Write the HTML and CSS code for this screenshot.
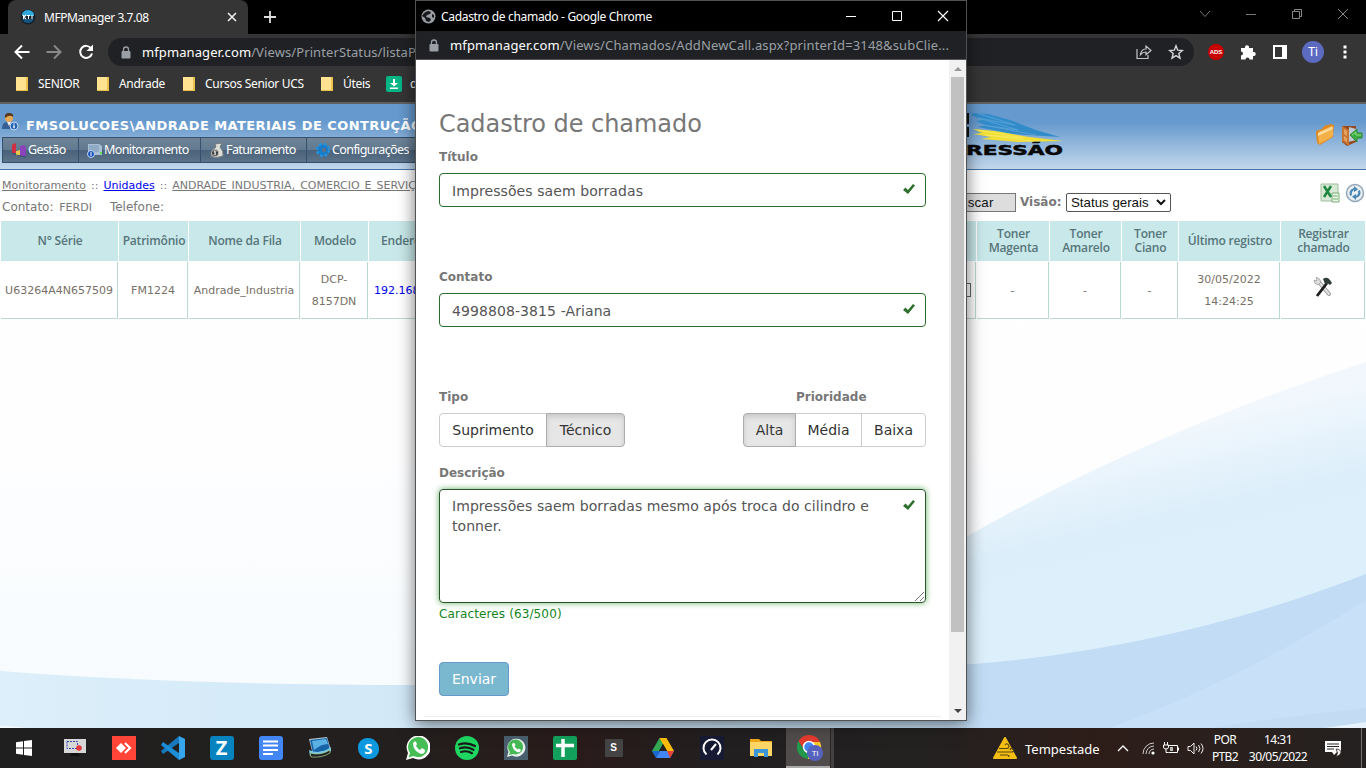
FILE: index.html
```html
<!DOCTYPE html>
<html lang="pt-BR">
<head>
<meta charset="utf-8">
<title>MFPManager 3.7.08</title>
<link rel="stylesheet" href="styles.css">
</head>
<body>
<div class="desktop">
  <div class="browser">
    <div class="tabstrip">
      <div class="tab">
        <svg class="favicon" width="16" height="16" viewBox="0 0 16 16"><circle cx="8" cy="8" r="7.500" fill="#14202b"/><path d="M2 5Q4 1 8 1t6 4v2H2z" fill="#2fa8dd"/><path d="M2 10h12Q12 14 8 14T2 10z" fill="#17557e"/><path d="M3.500 6v4M7 6.500h3M8.500 6.500V10M12 6v4M4 8l2-2M4 8l2 2" stroke="#fff" stroke-width="1.100"/></svg>
        <span class="tab-title">MFPManager 3.7.08</span>
        <svg class="tab-close" width="10" height="10" viewBox="0 0 10 10"><path d="M1 1l8 8M9 1L1 9" stroke="#eee" stroke-width="1.600"/></svg>
      </div>
      <svg class="new-tab" width="12" height="12" viewBox="0 0 12 12"><path d="M6 0v12M0 6h12" stroke="#ddd" stroke-width="1.800"/></svg>
      <div class="win-controls">
        <svg width="12" height="12" viewBox="0 0 12 12"><path d="M1 3l5 5.500L11 3" fill="none" stroke="#777"/></svg>
        <svg width="12" height="12" viewBox="0 0 12 12"><path d="M1 6.500h10" stroke="#777"/></svg>
        <svg width="12" height="12" viewBox="0 0 12 12"><path d="M1.500 3.500h7v7h-7zM3.500 3.500v-2h7v7h-2" fill="none" stroke="#888"/></svg>
        <svg width="12" height="12" viewBox="0 0 12 12"><path d="M1 1l10 10M11 1L1 11" stroke="#888"/></svg>
      </div>
    </div>
    <div class="toolbar">
      <svg width="16" height="16" viewBox="0 0 16 16"><path d="M15.500 8H2M8 1.500L1.500 8 8 14.500" fill="none" stroke="#fff" stroke-width="2"/></svg>
      <svg width="16" height="16" viewBox="0 0 16 16"><path d="M.5 8H14M8 1.500L14.500 8 8 14.500" fill="none" stroke="#898989" stroke-width="2"/></svg>
      <svg width="16" height="16" viewBox="0 0 16 16"><path d="M13.200 4.500A6 6 0 1 0 14 9.500" fill="none" stroke="#fff" stroke-width="2"/><path d="M15 .5v6.500H8.500z" fill="#fff"/></svg>
      <div class="omnibox">
        <svg width="10" height="13" viewBox="0 0 10 13"><rect x=".5" y="5" width="9" height="7.500" rx="1" fill="#9aa0a6"/><path d="M2.500 5V3.500a2.500 2.500 0 0 1 5 0V5" fill="none" stroke="#9aa0a6" stroke-width="1.300"/></svg>
        <span class="url"><b>mfpmanager.com</b>/Views/PrinterStatus/listaPr</span>
        <svg class="share" width="16" height="16" viewBox="0 0 16 16"><path d="M1 5v9.500h11V11M4.500 10.500C5 7 7 5 10 5V2l5 4.500-5 4.300V8C7.500 8 6 8.800 4.500 10.500z" fill="none" stroke="#c4c7c9" stroke-width="1.200"/></svg>
        <svg width="16" height="16" viewBox="0 0 16 16"><path d="M8 1.800l1.700 4.400 4.700.3-3.600 3 1.200 4.600L8 11.600l-4 2.500 1.200-4.600-3.600-3 4.700-.3z" fill="none" stroke="#d5d7d9" stroke-width="1.400"/></svg>
      </div>
      <div class="extensions">
        <span class="ads">ADS</span>
        <svg width="16" height="16" viewBox="0 0 16 16"><path d="M1 4h4a2.100 2.100 0 1 1 4 0h4v4a2.100 2.100 0 1 1 0 4v3.500H9.500a2 2 0 1 0-4 0H1V11.500a2 2 0 1 0 0-4z" fill="#fff"/></svg>
        <svg width="14" height="14" viewBox="0 0 14 14"><path d="M0 0h14v14H0zM2 2v10h7V2z" fill="#fff" fill-rule="evenodd"/></svg>
        <span class="avatar">Ti</span>
        <svg width="4" height="14" viewBox="0 0 4 14"><path d="M.5.500h3v3h-3zM.5 5.500h3v3h-3zM.5 10.500h3v3h-3z" fill="#fff"/></svg>
      </div>
    </div>
    <div class="bookmarks">
      <span class="bm b1"><i class="folder"></i>SENIOR</span>
      <span class="bm b2"><i class="folder"></i>Andrade</span>
      <span class="bm b3"><i class="folder"></i>Cursos Senior UCS</span>
      <span class="bm b4"><i class="folder"></i>Úteis</span>
      <span class="bm b5"><svg width="16" height="16" viewBox="0 0 16 16"><rect width="16" height="16" rx="2" fill="#04b686"/><path d="M7 3h2v4h3L8 10.500 4 7h3zM4 11.500h8V13H4z" fill="#fff"/></svg>d</span>
    </div>
    <div class="page">
      <svg class="waves" viewBox="0 170 1366 558" preserveAspectRatio="none">
        <defs>
          <linearGradient id="w1" x1="0" y1="0" x2=".25" y2="1"><stop offset="0" stop-color="#f6f9fe"/><stop offset=".3" stop-color="#f0f7fd"/><stop offset=".52" stop-color="#dceefa"/><stop offset="1" stop-color="#dcf1fc"/></linearGradient>
          <linearGradient id="w2" x1="0" y1="0" x2="0" y2="1"><stop offset="0" stop-color="#fff"/><stop offset=".5" stop-color="#fefeff"/><stop offset="1" stop-color="#f6fbfe"/></linearGradient>
          <linearGradient id="w3" x1="0" y1="0" x2="1" y2="0"><stop offset="0" stop-color="#dceffa"/><stop offset="1" stop-color="#c3def4"/></linearGradient>
        </defs>
        <path d="M0 170H1366V728H0z" fill="url(#w2)"/>
        <path d="M966 537Q1150 432 1366 362V728H966z" fill="url(#w1)"/>
        <path d="M0 671Q180 685 416 685 700 700 966 665V728H0z" fill="url(#w3)"/>
        <path d="M960 665Q1170 650 1366 574V728H960z" fill="#c1dcf4"/>
        <path d="M1110 728Q1240 680 1366 600V728z" fill="#c9e1f8"/>
        <path d="M1210 728Q1290 716 1366 708V728z" fill="#c3dcf4"/><path d="M1325 728l41-6v6z" fill="#e8f3fd"/>
        <path d="M0 726q10 0 28 2H0z" fill="#f5faff"/>
      </svg>
      <div class="site-header">
        <div class="brand">
          <div class="account">
            <svg width="18" height="18" viewBox="0 0 18 18"><path d="M1 16q0-7 5-7t6 4v3z" fill="#365f94"/><circle cx="8" cy="5" r="4" fill="#e5aa59"/><path d="M4 5Q3 0 8 0t4 4Q9 1 4 5z" fill="#5a381c"/><path d="M6 9l2 4 2-4z" fill="#eee"/><circle cx="13" cy="13" r="4" fill="#2464b4" stroke="#c9dcf2"/><path d="M13 10.500v1M13 12.300v3" stroke="#fff" stroke-width="1.400"/></svg>
            <span>FMSOLUCOES\ANDRADE MATERIAIS DE CONTRUÇÃO</span>
          </div>
          <div class="menu">
            <span class="m1"><svg width="16" height="16" viewBox="0 0 16 16"><path d="M1 3l3-2 1 1v9H1z" fill="#d22e43"/><path d="M5 9l4-1v6H5z" fill="#e9c94d"/><path d="M9 4l4-1 2 2v9H9z" fill="#8b43ba"/><path d="M1 11l4 2 10 2" stroke="#344c6f" fill="none"/></svg>Gestão</span>
            <span class="m2"><svg width="16" height="16" viewBox="0 0 16 16"><path d="M1 2h11l3 2v9H5L1 11z" fill="#a9c0d4"/><path d="M2 3h10v7H2z" fill="#90abc6"/><path d="M13 11h2" stroke="#5dde4a" stroke-width="2"/><circle cx="4" cy="12" r="3.500" fill="#1650b9" stroke="#c7d9f5"/><path d="M4 10v4" stroke="#fff"/></svg>Monitoramento</span>
            <span class="m3"><svg width="16" height="16" viewBox="0 0 16 16"><path d="M6 2l7-1-2 4q4 4 3 9-7 3-12 0 0-6 5-9z" fill="#dedfd8" stroke="#737b78"/><circle cx="6" cy="11" r="3.500" fill="#333" stroke="#bbb"/><path d="M7.500 9.300q-3-1-2.500.8l2 1q0 2-2.500 1.200M6 8.500v5" stroke="#fff" fill="none" stroke-width=".7"/></svg>Faturamento</span>
            <span class="m4"><svg width="16" height="16" viewBox="0 0 16 16"><circle cx="8" cy="8" r="5.200" fill="#1a78c5" stroke="#2393df" stroke-width="4" stroke-dasharray="2.600 1.480"/><circle cx="8" cy="8" r="5" fill="#167dcc"/><circle cx="9" cy="8" r="2.200" fill="#5c7189"/></svg>Configurações</span>
          </div>
        </div>
        <svg class="logo" width="163" height="46" viewBox="0 0 163 46"><path d="M62 1h7v11h-7zM62 15h7v10h-7z" fill="#111"/><path d="M73 1l15 1 22 6 26 10 24 7-32-2-16-1-34-7 7-2-9-4 7-1-12-5z" fill="#338cca"/><path d="M77 1l38 12-37-7 40 12-35-5 53 10" stroke="#5aa4d8" fill="none" stroke-width=".8"/><path d="M73 17l22 2 34 6 34 4-45 1-37-3 10-2-18-3 9-1z" fill="#f1df36"/><path d="M78 18l45 8-37-3 45 6" stroke="#f9eb68" fill="none" stroke-width=".7"/><text x="66" y="43" textLength="97" lengthAdjust="spacingAndGlyphs" class="logo-text">RESSÃO</text></svg>
        <div class="header-actions">
          <svg width="20" height="22" viewBox="0 0 20 22"><path d="M1 8q0-2 3-2l3-1 2-3 7-2 3 1-1 12-13 8-3-2z" fill="#df8a24"/><path d="M4 8l13-6 1 9-14 7z" fill="#fbca75"/><path d="M3 9l15-6-1 10-13 7z" fill="#f5b147"/><path d="M3 9l15-6v2L3 12z" fill="#fddc9c"/></svg>
          <svg width="24" height="24" viewBox="0 0 24 24"><path d="M2 2h14v15H2z" fill="#bdcbd6"/><path d="M2 2h14v3l-7-2v15l7-2v2l-9 4-5-4z" fill="#934a21"/><path d="M2 2l7 4v16l-7-5z" fill="#c87634"/><path d="M4 5l3 2v5l-3-2zM4 12l3 2v4l-3-2z" fill="#e7a261"/><path d="M10 11l7-6v4h5v5h-5v4z" fill="#3dad43" stroke="#2f853a"/><path d="M12 11l4-3v3h5" stroke="#8edf80" fill="none"/></svg>
        </div>
      </div>
      <div class="site-info">
        <div class="crumbs">
          <div class="trail"><u>Monitoramento</u> :: <a>Unidades</a> :: <u>ANDRADE INDUSTRIA, COMERCIO E SERVIÇOS</u></div>
          <div class="contact">Contato: <small>FERDI</small><span>Telefone:</span></div>
        </div>
        <div class="filters"><span class="search">Buscar</span><b>Visão:</b><span class="select">Status gerais<svg width="10" height="7" viewBox="0 0 10 7"><path d="M1 1l4 4 4-4" fill="none" stroke="#111" stroke-width="2"/></svg></span></div>
        <div class="exports">
          <svg width="20" height="20" viewBox="0 0 20 20"><path d="M1 1h17v17H1z" fill="#d8ead5" stroke="#9fbf9c"/><path d="M12 10h7v9h-7z" fill="#edf7eb" stroke="#7bab79"/><path d="M13 13h5M13 16h5" stroke="#71b369"/><path d="M4 3l7 11M11 3L4 14" stroke="#218844" stroke-width="2.600"/></svg>
          <svg width="20" height="20" viewBox="0 0 20 20"><circle cx="10" cy="10" r="8.500" fill="#e8eef2" stroke="#94a7b8" stroke-width="1.500"/><path d="M5 13Q3 7 9 5V3l4 3.500L9 9V7q-3 2-2 5z" fill="#4b87b6"/><path d="M15 7q2 6-4 8v2l-4-3.500L11 11v2q3-2 2-5z" fill="#4b87b6"/></svg>
        </div>
      </div>
      <div class="grid">
        <div class="th">N° Série</div><div class="th">Patrimônio</div><div class="th">Nome da Fila</div><div class="th">Modelo</div><div class="th start">Endereço IP</div><div class="th">Toner<br>Magenta</div><div class="th">Toner<br>Amarelo</div><div class="th">Toner<br>Ciano</div><div class="th">Último registro</div><div class="th">Registrar<br>chamado</div>
        <div class="td">U63264A4N657509</div><div class="td">FM1224</div><div class="td">Andrade_Industria</div><div class="td">DCP-<br>8157DN</div><div class="td ip"><a>192.168.0.10</a><i class="level"></i></div><div class="td">-</div><div class="td">-</div><div class="td">-</div><div class="td">30/05/2022<br>14:24:25</div><div class="td"><svg class="tools" width="20" height="20" viewBox="0 0 20 20"><path d="M5 4l11 13" stroke="#999" stroke-width="4" stroke-linecap="round"/><path d="M5 4l11 13" stroke="#e2e2e2" stroke-width="2" stroke-linecap="round"/><path d="M1 3q0 4 4 5l3-3Q7 1 3 0l1 3-1 1z" fill="#ddd" stroke="#888" stroke-width=".6"/><path d="M14 6L4 19" stroke="#1d1d1d" stroke-width="2.800"/><path d="M10 2q4-3 7 1l2 3-2 2-3-2-2 1z" fill="#303b3b"/></svg></div>
      </div>
    </div>
  </div>

  <div class="popup">
    <div class="popup-title">
      <svg width="15" height="15" viewBox="0 0 15 15"><circle cx="7.500" cy="7.500" r="7" fill="#9a9da3"/><path d="M7 2l3 1-1 2-3 1-1 2 4 1 1 2-2 2-3-1-1-3-3-2Q3 3 7 2zM11 5l2 1v3l-2-1z" fill="#17181a"/></svg>
      <span>Cadastro de chamado - Google Chrome</span>
      <div class="popup-controls">
        <svg width="12" height="12" viewBox="0 0 12 12"><path d="M1 6.500h10" stroke="#fff"/></svg>
        <svg width="12" height="12" viewBox="0 0 12 12"><path d="M1.500 1.500h9v9h-9z" fill="none" stroke="#fff"/></svg>
        <svg width="12" height="12" viewBox="0 0 12 12"><path d="M1 1l10 10M11 1L1 11" stroke="#fff" stroke-width="1.200"/></svg>
      </div>
    </div>
    <div class="popup-url">
      <svg width="10" height="13" viewBox="0 0 10 13"><rect x=".5" y="5" width="9" height="7.500" rx="1" fill="#9aa0a6"/><path d="M2.500 5V3.500a2.500 2.500 0 0 1 5 0V5" fill="none" stroke="#9aa0a6" stroke-width="1.300"/></svg>
      <span><b>mfpmanager.com</b>/Views/Chamados/AddNewCall.aspx?printerId=3148&amp;subClie...</span>
    </div>
    <div class="popup-body">
      <div class="form">
        <h1>Cadastro de chamado</h1>
        <div class="group"><label>Título</label><div class="input"><span>Impressões saem borradas</span><svg width="14" height="12" viewBox="0 0 14 12"><path d="M1 7l2.500-2.500L6 7l5-6 2 1.500L6 11z" fill="#2d702c"/></svg></div></div>
        <div class="group"><label>Contato</label><div class="input"><span>4998808-3815 -Ariana</span><svg width="14" height="12" viewBox="0 0 14 12"><path d="M1 7l2.500-2.500L6 7l5-6 2 1.500L6 11z" fill="#2d702c"/></svg></div></div>
        <div class="choices">
          <div><label>Tipo</label><div class="buttons"><span class="suprimento">Suprimento</span><span class="on tecnico">Técnico</span></div></div>
          <div class="priority"><label>Prioridade</label><div class="buttons"><span class="on alta">Alta</span><span class="media">Média</span><span class="baixa">Baixa</span></div></div>
        </div>
        <label>Descrição</label>
        <div class="textarea"><p>Impressões saem borradas mesmo após troca do cilindro e tonner.</p><svg width="14" height="12" viewBox="0 0 14 12"><path d="M1 7l2.500-2.500L6 7l5-6 2 1.500L6 11z" fill="#2d702c"/></svg><svg class="grip" width="9" height="9" viewBox="0 0 9 9"><path d="M0 9L9 0M5 9l4-4" stroke="#777" fill="none"/></svg></div>
        <div class="count">Caracteres (63/500)</div>
        <div class="send">Enviar</div>
        <div class="rule"></div>
      </div>
      <div class="scrollbar"><i class="up"></i><i class="thumb"></i><i class="down"></i></div>
    </div>
  </div>

  <div class="taskbar">
    <span class="cell first"><svg width="16" height="16" viewBox="0 0 16 16"><path d="M0 2.200L7 1.200v6.300H0zM8 1l8-1v7.500H8zM0 8.500h7v6.300L0 13.800zM8 8.500h8V16l-8-1z" fill="#fff"/></svg></span>
    <span class="cell"><svg width="24" height="24" viewBox="0 0 24 24"><path d="M1 3h22v14H1z" fill="#d7d7d7"/><path d="M4 5.500h10.500v7H4z" fill="none" stroke="#3448ba" stroke-dasharray="2 1"/><circle cx="16" cy="12" r="2.800" fill="#e2363c"/><path d="M9 17h6l2 3H7z" fill="#111"/></svg></span>
    <span class="cell"><svg width="24" height="24" viewBox="0 0 24 24"><path d="M0 0h24v24H0z" fill="#ff4438"/><path d="M4 12l5-5 5 5-5 5z" fill="#fff"/><path d="M13 7l5 5-5 5" stroke="#fff" fill="none" stroke-width="2.200"/></svg></span>
    <span class="cell"><svg width="24" height="24" viewBox="0 0 24 24"><path d="M18 0l6 3v18l-6 3z" fill="#37a7ed"/><path d="M18 0L0 15l2 3L18 7z" fill="#1778bd"/><path d="M0 9l2-3 16 11v7z" fill="#1c8dd7"/></svg></span>
    <span class="cell"><span class="tile z">Z</span></span>
    <span class="cell"><svg width="24" height="24" viewBox="0 0 24 24"><rect width="24" height="24" rx="3" fill="#4386f5"/><path d="M4 5.500h15M4 9.500h15M4 14h15M4 18h10" stroke="#fff" stroke-width="2.200"/></svg></span>
    <span class="cell"><svg width="24" height="24" viewBox="0 0 24 24"><path d="M1 3l18-2 4 13-18 5z" fill="#b8c8d4"/><path d="M2 4l17-2 3 12-17 3z" fill="#1765a8"/><path d="M4 5l14-2 2 5Q13 8 6 14z" fill="#5bb1e4"/><path d="M1 14q11 5 22-3v4q-9 8-21 5z" fill="#78c8e5"/><path d="M2 17q10 3 20-3v3q-8 5-19 4z" fill="#222" stroke="#aad48f" stroke-width=".7"/></svg></span>
    <span class="cell"><span class="skype">S</span></span>
    <span class="cell"><svg width="24" height="24" viewBox="0 0 24 24"><path d="M0 24l2-7A12 12 0 1 1 7 22z" fill="#fff"/><path d="M2.500 21.500L4 17A10 10 0 1 1 7.500 20z" fill="#46bd55"/><path d="M7 7q2-3 3-1l1 2-1 2q2 3 4 4l2-2 3 2q0 4-4 4Q7 15 7 7z" fill="#fff"/></svg></span>
    <span class="cell"><svg width="24" height="24" viewBox="0 0 24 24"><circle cx="12" cy="12" r="12" fill="#1ed760"/><path d="M4 8.500q8-3 16 1.500M5 12.300q7-2.300 13.500 1.500M6 16q6-2 11 1.200" fill="none" stroke="#191919" stroke-width="2.200" stroke-linecap="round"/></svg></span>
    <span class="cell"><svg width="24" height="24" viewBox="0 0 24 24"><path d="M0 0h24v24H0z" fill="#4a5f6d"/><path d="M3 21l1.500-5A9 9 0 1 1 8 19.500z" fill="#e9f2ea"/><path d="M5 19l1-3A7.500 7.500 0 1 1 9 18z" fill="#48b957"/><path d="M8 8q2-2 3 0l.5 1-1 1.500 3 3 1-1 2.500 1.500q-1 3-4 2Q8 13 8 8z" fill="#fff"/></svg></span>
    <span class="cell"><svg width="24" height="24" viewBox="0 0 24 24"><rect width="24" height="24" rx="2" fill="#12a05c"/><path d="M3 9.500h18M10 3v18" stroke="#fff" stroke-width="3.500"/></svg></span>
    <span class="cell"><span class="tile s">S</span></span>
    <span class="cell"><svg width="22" height="20" viewBox="0 0 22 20"><path d="M7.500 0h7L11 6 4 19 0 13z" fill="#34a853"/><path d="M7.500 0h7L22 13h-7z" fill="#fbbc05"/><path d="M0 13l4 7 4-7z" fill="#1967d2"/><path d="M8 13h14l-4 7H4z" fill="#4285f4"/><path d="M15 13h7l-4 7z" fill="#ea4335"/><path d="M11 6l4 7H7z" fill="#231f1e"/></svg></span>
    <span class="cell"><svg width="24" height="24" viewBox="0 0 24 24"><path d="M0 0h24v24H0z" fill="#171a33"/><path d="M6.500 18.500a8.500 8.500 0 1 1 11 0" fill="none" stroke="#fff" stroke-width="2"/><path d="M11 14l5-6" stroke="#fff" stroke-width="2"/></svg></span>
    <span class="cell"><svg width="22" height="20" viewBox="0 0 22 20"><path d="M0 1h9l2 2h11v15H0z" fill="#efaa18"/><path d="M0 4h22v14H0z" fill="#ffd767"/><path d="M4 19v-8h14v8h-4v-4H8v4z" fill="#3c96d8"/></svg></span>
    <span class="cell active"><svg width="26" height="26" viewBox="0 0 26 26"><path d="M12 0A12 12 0 0 0 1.500 6L7 15l5-8h11A12 12 0 0 0 12 0z" fill="#e33b2e"/><path d="M1.500 6A12 12 0 0 0 11 24l5-9H7z" fill="#22984b"/><path d="M12 7h11a12 12 0 0 1-12 17z" fill="#f9c72b"/><circle cx="12" cy="12" r="5.500" fill="#4285f4" stroke="#fff" stroke-width="1.500"/><circle cx="18" cy="18" r="8" fill="#5762be"/><text x="18" y="21" text-anchor="middle" class="badge-text">Ti</text></svg></span>
    <i class="stack"></i>
    <div class="tray">
      <svg class="storm" width="24" height="22" viewBox="0 0 24 22"><path d="M12 1l11 20H1z" fill="#f5be14" stroke="#f5be14" stroke-width="2" stroke-linejoin="round"/><path d="M6 11.500h8q3-1 1.500-3.500t-3.500 0M4 15h14q4 0 2-2.500t-3 .5M7 18h7q2 0 2 2" stroke="#564810" fill="none" stroke-width="1.200"/></svg>
      <span class="weather">Tempestade</span>
      <svg class="t1" width="12" height="8" viewBox="0 0 12 8"><path d="M1 7l5-5 5 5" fill="none" stroke="#fff" stroke-width="1.300"/></svg>
      <svg class="t2" width="13" height="13" viewBox="0 0 13 13"><path d="M1 12A11 11 0 0 1 12 1M4 12a8 8 0 0 1 8-8M7 12a5 5 0 0 1 5-5" fill="none" stroke="#ccc"/><circle cx="11" cy="11" r="1.600" fill="#fff"/></svg>
      <svg class="t3" width="16" height="13" viewBox="0 0 16 13"><path d="M5 3.500h9.500v7h-9M15.500 5.500v3M1.500 0v3M4.500 0v3M.5 3h5v2q0 2-2.500 2T.5 5zM3 7v3.500h2.500" fill="none" stroke="#fff"/><path d="M7 5h3v4H7z" fill="#bbb"/></svg>
      <svg class="t4" width="17" height="13" viewBox="0 0 17 13"><path d="M1 4.500h2.500L7 1v11L3.500 8.500H1zM9 4.500q2 2 0 4M11.500 3q3 3.500 0 7M14 1.500q4 5 0 10" fill="none" stroke="#eee"/></svg>
      <span class="lang">POR<br>PTB2</span>
      <span class="clock">14:31<br>30/05/2022</span>
      <svg class="notice" width="17" height="17" viewBox="0 0 17 17"><path d="M0 1h16v11h-4l-3 3-2-3H0z" fill="#fff"/><path d="M2 4h12M2 6.500h12M2 9h7" stroke="#292321"/><path d="M11 9q5 0 5 4-2 4-5 3 3-3 0-7z" fill="#eee" stroke="#292321" stroke-width=".8"/></svg>
      <i class="peek"></i>
    </div>
  </div>
</div>
</body>
</html>
```
FILE: styles.css
```css
* { box-sizing: border-box; }
body { margin: 0; font-family: "DejaVu Sans", sans-serif; }
svg { display: block; flex: none; }
.desktop { position: relative; width: 1366px; height: 768px; overflow: hidden; display: flex; flex-direction: column; background: #000; }
.browser { height: 728px; display: flex; flex-direction: column; background: #353535; font-family: "Noto Sans", sans-serif; color: #fff; }

.tabstrip { height: 34px; display: flex; align-items: center; background: #000; padding-left: 8px; }
.tab { width: 240px; height: 34px; display: flex; align-items: center; background: #353535; border-radius: 8px 8px 0 0; padding: 0 11px 0 12px; }
.tab-title { font-size: 12px; margin-left: 8px; letter-spacing: -.45px; white-space: nowrap; }
.tab-close { margin-left: auto; }
.new-tab { margin-left: 16px; }
.win-controls { margin-left: auto; display: flex; gap: 34px; padding: 0 17px 6px 0; }

.toolbar { height: 37px; display: flex; align-items: center; gap: 16px; padding: 0 0 1px 14px; }
.omnibox { width: 1086px; height: 28px; border-radius: 14px; background: #202124; margin-left: -2px; display: flex; align-items: center; padding: 0 10px 0 13px; }
.url { font-size: 13px; letter-spacing: .1px; margin-left: 11px; color: #9aa0a6; white-space: nowrap; }
.url b, .popup-url b { font-weight: 400; color: #fff; }
.share { margin-left: auto; margin-right: 16px; }
.extensions { display: flex; align-items: center; margin-left: -2px; }
.ads { width: 16px; height: 16px; border-radius: 50%; background: #c90000; font: bold 6px/16px "Liberation Sans", sans-serif; text-align: center; margin-right: 16px; }
.avatar { width: 22px; height: 22px; border-radius: 50%; background: #5c6bc0; font: 12px/22px Roboto, sans-serif; text-align: center; margin: 0 19px 0 15px; }
.extensions svg:nth-of-type(1) { margin-right: 17px; }

.bookmarks { height: 33px; display: flex; align-items: center; padding: 0 0 6px 16px; border-bottom: 2px solid #5f6062; font-size: 12px; }
.bm { display: flex; align-items: center; white-space: nowrap; letter-spacing: -.3px; gap: 10px; }
.b1 { width: 81px; } .b2 { width: 86px; } .b3 { width: 138px; } .b4 { width: 65px; } .b5 { gap: 8px; }
.folder { width: 12px; height: 14px; background: #ffe391; border-right: 2px solid #eac14b; border-bottom: 1px solid #eac14b; }

.page { position: relative; flex: 1; background: #fff; color: #777; font-family: "DejaVu Sans", sans-serif; }
.waves { position: absolute; left: 0; top: 66px; width: 1366px; height: 558px; }
.site-header { position: relative; height: 66px; display: flex; background: linear-gradient(#6699cd 0, #6699cd 18px, #c0d6eb 64px); border-bottom: 1px solid #4573ab; }
.brand { width: 900px; }
.account { display: flex; height: 33px; padding-left: 1px; font-size: 13px; font-weight: bold; color: #fff; gap: 7px; padding-top: 9px; white-space: nowrap; letter-spacing: .42px; }
.account span { line-height: 26px; }
.menu { display: flex; height: 26px; background: #34506c; border: 1px solid #34506c; margin-left: 2px; gap: 1px; font: 12.5px/24px "Noto Sans", sans-serif; color: #fff; }
.menu span { display: flex; align-items: center; background: linear-gradient(#6f8498 0, #62798f 48%, #4a627a 52%, #5c7389); padding-left: 8px; letter-spacing: -.6px; gap: 1px; }
.m1 { width: 75px; } .m2 { width: 121px; } .m3 { width: 105px; } .m4 { width: 150px; }
.logo { margin-top: 8px; }
.logo-text { font: bold 14px "DejaVu Sans", sans-serif; fill: #080808; stroke: #080808; stroke-width: .5px; }
.header-actions { margin-left: auto; display: flex; gap: 5px; padding: 20px 2px 0 0; }

.site-info { position: relative; height: 51px; display: flex; font-size: 11px; }
.crumbs { width: 945px; padding: 7px 0 0 2px; line-height: 17px; white-space: nowrap; }
.trail { word-spacing: 1.5px; }
a { color: #00e; }
.crumbs a { text-decoration: underline; }
.contact { font-size: 12px; margin-top: 5px; }
.contact small { font-size: 11px; margin-left: 2px; }
.contact span { margin-left: 18px; }
.filters { display: flex; padding-top: 22px; height: 42px; align-items: center; font-size: 12px; }
.search { width: 71px; height: 19px; border: 1px solid #777; background: #ddd; color: #111; font: 13.3px/17px "Liberation Sans", sans-serif; padding-left: 5px; letter-spacing: .2px; }
.filters b { margin: 0 3px 0 4px; width: 43px; }
.select { width: 105px; height: 19px; border: 1px solid #555; border-radius: 2px; background: #fff; color: #111; font: 13.3px/17px "Liberation Sans", sans-serif; padding: 0 4px; display: flex; align-items: center; justify-content: space-between; }
.exports { margin-left: auto; display: flex; gap: 5px; padding: 13px 1px 0 0; }

.grid { position: relative; display: grid; grid-template-columns: 117px 69px 111px 67px 607px 72px 71px 56px 101px 84px; grid-template-rows: 40px 57px; column-gap: 1px; row-gap: 1px; padding-left: 1px; }
.th, .td { display: flex; align-items: center; justify-content: center; text-align: center; white-space: nowrap; }
.th { background: #c9e8e9; color: #56757a; font: 600 12px/14px "Open Sans", sans-serif; letter-spacing: -.2px; padding-left: 1px; }
.th.start { justify-content: flex-start; padding-left: 12px; }
.td { background: #fff; border-right: 1px solid #b8d8d0; border-bottom: 1px solid #b8d8d0; font-size: 11px; line-height: 22px; color: #777067; padding-top: 1px; }
.td.ip { justify-content: space-between; padding: 1px 4px 0 5px; }
.level { width: 13px; height: 14px; border: 1px solid #666; margin-bottom: 2px; }
.tools { margin-bottom: 7px; }

.popup { position: absolute; left: 415px; top: 0; width: 552px; height: 721px; border: 1px solid #505254; background: #fff; box-shadow: 0 3px 16px rgba(0,0,0,.55); display: flex; flex-direction: column; font-family: "Noto Sans", sans-serif; }
.popup-title { height: 30px; background: #000; color: #fff; display: flex; align-items: center; padding: 0 17px 0 5px; font-size: 12px; white-space: nowrap; }
.popup-title span { margin-left: 5px; letter-spacing: -.32px; }
.popup-controls { margin-left: auto; display: flex; gap: 34px; }
.popup-url { height: 29px; background: #202124; color: #9aa0a6; border-bottom: 1px solid #555; display: flex; align-items: center; padding-left: 13px; font-size: 13px; letter-spacing: .14px; white-space: nowrap; }
.popup-url span { margin-left: 11px; }
.popup-body { flex: 1; display: flex; min-height: 0; font-family: "DejaVu Sans", sans-serif; color: #777; }
.form { width: 533px; padding: 46px 23px 0; }
h1 { font-size: 24px; line-height: 36px; font-weight: 400; margin: 0 0 5px; color: #777; letter-spacing: -.05px; white-space: nowrap; }
label { display: block; font-size: 12px; line-height: 20px; font-weight: bold; margin-bottom: 6px; }
.group { height: 120px; }
.input { width: 487px; height: 34px; border: 1px solid #2b6c2c; border-radius: 4px; display: flex; justify-content: space-between; padding: 0 9px 0 12px; font-size: 14px; line-height: 34px; letter-spacing: .09px; color: #555; white-space: nowrap; }
.input svg { margin-top: 9px; }
.choices { display: flex; justify-content: space-between; height: 76px; width: 487px; }
.priority label { padding-left: 53px; }
.buttons { display: flex; height: 34px; font-size: 14px; line-height: 32px; color: #333; text-align: center; }
.buttons span { border: 1px solid #ccc; margin-left: -1px; }
.buttons span:first-child { border-radius: 4px 0 0 4px; margin-left: 0; }
.buttons span:last-child { border-radius: 0 4px 4px 0; }
.buttons .on { background: #e6e6e6; border-color: #adadad; box-shadow: inset 0 3px 5px rgba(0,0,0,.125); z-index: 1; }
.suprimento { width: 108px; } .tecnico { width: 79px; } .alta { width: 53px; } .media { width: 67px; } .baixa { width: 65px; }
.textarea { width: 487px; height: 114px; position: relative; border: 1px solid #2b542c; border-radius: 4px; display: flex; justify-content: space-between; padding: 6px 9px 0 12px; color: #555; box-shadow: 0 0 6px #67b168; }
.textarea p { margin: 0; width: 430px; font-size: 14px; line-height: 20px; letter-spacing: .06px; }
.textarea svg { margin-top: 3px; }
.textarea .grip { position: absolute; right: 1px; bottom: 1px; margin: 0; }
.count { font-size: 12px; line-height: 22px; letter-spacing: .12px; color: #12851b; }
.send { width: 70px; height: 34px; margin-top: 37px; border: 1px solid #6799c9; border-radius: 4px; background: #7ab8cf; color: #fff; font-size: 14px; line-height: 32px; text-align: center; }
.rule { width: 517px; margin: 20px 0 0 -15px; border-top: 1px solid #eee; }
.scrollbar { width: 17px; background: #f1f1f1; display: flex; flex-direction: column; align-items: center; }
.up { border: 4px solid transparent; border-top: 0; border-bottom: 4px solid #999; margin: 7px 0 6px; }
.thumb { width: 13px; height: 555px; background: #c1c1c1; }
.down { border: 4px solid transparent; border-bottom: 0; border-top: 4px solid #444; margin-top: 77px; }

.taskbar { height: 40px; display: flex; background: linear-gradient(90deg, #201f1f 0, #231f1e 30%, #2a1b1b 42%, #211f20 54%, #242121 68%, #2d1d18 80%, #2a201d 90%, #242120); color: #fff; font-family: "Noto Sans", sans-serif; }
.cell { width: 49px; display: flex; align-items: center; justify-content: center; }
.first { width: 50px; padding-right: 2px; }
.active { width: 44px; margin-left: 1px; background: #514c4c; border-bottom: 2px solid #aaa; }
.active svg { margin-left: 4px; margin-top: 2px; }
.stack { width: 4px; background: #464141; border-left: 1px solid #272424; }
.tile { width: 24px; height: 24px; border-radius: 3px; text-align: center; }
.z { background: #0784bf; font: bold 20px/24px "Open Sans", sans-serif; }
.s { width: 18px; height: 18px; border-radius: 1px; background: #444; font: bold 10px/18px "Liberation Sans", sans-serif; }
.skype { width: 21px; height: 21px; border-radius: 9px 11px; background: #0d98df; font: bold 15px/21px "Open Sans", sans-serif; text-align: center; }
.badge-text { font: 8px Roboto, sans-serif; fill: #fff; }
.tray { margin-left: auto; width: 373px; display: flex; align-items: center; white-space: nowrap; }
.weather { width: 84px; font-size: 13px; padding-top: 2px; margin-left: 8px; }
.t1 { margin-left: 8px; } .t2 { margin-left: 13px; } .t3 { margin-left: 8px; } .t4 { margin-left: 8px; }
.lang, .clock { font-size: 12px; line-height: 17px; text-align: center; }
.lang { width: 34px; margin-left: 4px; letter-spacing: -.6px; }
.clock { width: 66px; margin-left: 3px; letter-spacing: -.55px; }
.notice { margin-left: 14px; }
.peek { width: 1px; height: 40px; background: #77716f; margin-left: 19px; }
```
